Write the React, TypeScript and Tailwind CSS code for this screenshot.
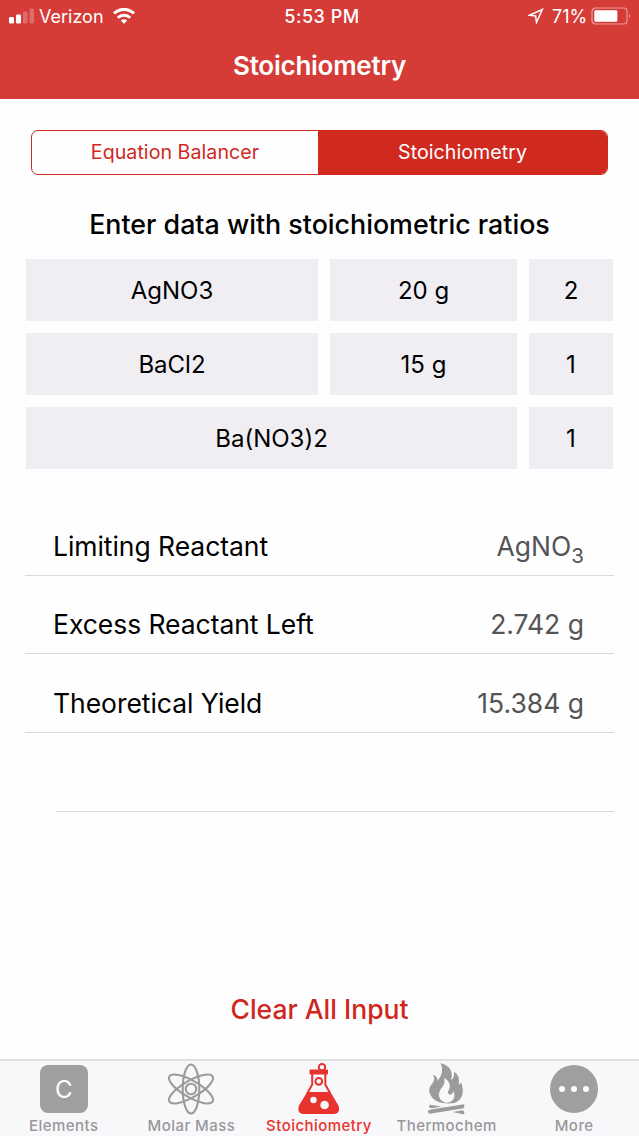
import React from 'react';
import clsx from 'clsx';

const reactants = [
  { formula: 'AgNO3', mass: '20 g', ratio: '2' },
  { formula: 'BaCl2', mass: '15 g', ratio: '1' },
];

const results = [
  { label: 'Limiting Reactant', value: <>AgNO<sub className="bottom-[-7px] text-[20.500px] leading-none">3</sub></> },
  { label: 'Excess Reactant Left', value: '2.742 g' },
  { label: 'Theoretical Yield', value: '15.384 g' },
];

const ElementsIcon = () => (
  <div className="flex h-12 w-12 items-center justify-center rounded-[8px] bg-[#9f9fa0] pt-px text-[24px] text-white">C</div>
);

const AtomIcon = () => (
  <svg viewBox="0 0 52 52" className="h-[52px] w-[52px]" fill="none" stroke="#9b9b9d" strokeWidth="2.100">
    <ellipse cx="26" cy="26" rx="8.300" ry="24.500" />
    <ellipse cx="26" cy="26" rx="8.300" ry="25" transform="rotate(60 26 26)" />
    <ellipse cx="26" cy="26" rx="8.300" ry="25" transform="rotate(120 26 26)" />
    <circle cx="26" cy="26" r="5.300" />
  </svg>
);

const FlaskIcon = () => (
  <svg viewBox="0 0 42 52" className="h-[52px] w-[42px]" fill="none" stroke="#e8322e" strokeWidth="2">
    <circle cx="24" cy="4.200" r="3.200" />
    <rect x="11.500" y="6.500" width="18.500" height="5" rx="0.800" fill="#e8322e" stroke="none" />
    <path d="M14.200 11v10.500L9.500 30M27.300 11v10.500L32 30" />
    <circle cx="20.800" cy="18.300" r="3.400" />
    <path
      fillRule="evenodd"
      fill="#e8322e"
      stroke="none"
      d="M9.200 29h23.200l8 13.500q2.600 8.600-5 8.600H6q-7.600 0-5-8.600zM12.300 37a3.200 3.200 0 1 0 6.400 0a3.200 3.200 0 1 0-6.400 0M22.300 42a4.300 4.300 0 1 0 8.600 0a4.300 4.300 0 1 0-8.600 0"
    />
  </svg>
);

const FireIcon = () => (
  <svg viewBox="0 0 40 52" className="h-[52px] w-[40px]" fill="#9b9b9d">
    <path
      fillRule="evenodd"
      d="M13.500 0.300C20 1.500 25 6 24.800 12.300c0 2-.4 3.300-.6 4.700c2.600-2 3.500-4.700 2.500-8.300c5.200 2.600 5.800 7 5 13c1.200-.3 2-1.200 2.400-2.400c3.300 9.200 2.200 16.700-5.600 20.200c-1.700.8-4 .9-7 .9c-8 0-15-1.700-18.500-9.400c-2.200-5.200.5-8.300 3-11.500c1.800-2.600 1.600-5-.2-7.700c3.700 1 5 3.300 4.800 6.200C14.500 13 16.800 7.500 13.500 0.300zM17 15c1.600 5.800-1.200 8-3.600 11.700C9.800 32.500 13 39.300 20 39.700c6.500 0 9.200-6.700 6.300-11.400c-.6 2.700-1.900 3.500-3.500 3.300c-1.900-.4-2.500-2.600-1-4.600c2.600-4.400.3-9.800-4.800-12z"
    />
    <path d="M2.600 41.800L14.500 43.600L5 45.300L2 44.600zM37 41.300Q38.300 43.500 36.600 45.200L3 50.800Q1 50.800 1 48.500Q1 47 2.500 46.800zM25.500 49L35.500 47.300Q38.200 48.500 37 50.800Q36.500 51.500 35 51z" />
  </svg>
);

const MoreIcon = () => (
  <div className="flex h-12 w-12 items-center justify-center gap-[6px] rounded-full bg-[#9f9fa0]">
    <span className="h-1.5 w-1.5 rounded-full bg-white" />
    <span className="h-1.5 w-1.5 rounded-full bg-white" />
    <span className="h-1.5 w-1.5 rounded-full bg-white" />
  </div>
);

const tabs = [
  { label: 'Elements', icon: <ElementsIcon /> },
  { label: 'Molar Mass', icon: <AtomIcon /> },
  { label: 'Stoichiometry', icon: <FlaskIcon /> },
  { label: 'Thermochem', icon: <FireIcon /> },
  { label: 'More', icon: <MoreIcon /> },
];

const StatusBar = () => (
  <div className="grid h-8 grid-cols-3 items-center pl-[9px] text-[18px] text-white">
    <div className="flex items-center">
      <svg viewBox="0 0 26 16" className="h-4 w-[26px]" fill="#fff">
        <rect x="0" y="9" width="5" height="6.500" rx="1.200" />
        <rect x="7" y="6.500" width="5" height="9" rx="1.200" />
        <rect x="14" y="3.500" width="4.500" height="12" rx="1" opacity="0.25" />
        <rect x="20.500" y="0.500" width="4.500" height="15" rx="1" opacity="0.25" />
      </svg>
      <span className="ml-1">Verizon</span>
      <svg viewBox="0 0 22 16" className="ml-[9px] h-4 w-[22px]" fill="none" stroke="#fff" strokeWidth="3">
        <path d="M1 5.500a14.200 14.200 0 0 1 20 0" />
        <path d="M4.800 9.700a8.800 8.800 0 0 1 12.400 0" />
        <path d="M11 15.700l-3.200-3.200a4.500 4.500 0 0 1 6.400 0z" fill="#fff" stroke="none" />
      </svg>
    </div>
    <span className="pr-[4px] text-center font-medium tracking-[0.500px]">5:53 PM</span>
    <div className="flex items-center justify-end pr-[8px]">
      <svg viewBox="0 0 16 16" className="h-4 w-4" fill="none" stroke="#fff" strokeWidth="1.500">
        <path d="M1.500 7.200L14.300 1.500L8.500 14.300L7.600 8z" />
      </svg>
      <span className="ml-2 tracking-[-0.100px]">71%</span>
      <svg viewBox="0 0 40 18" className="ml-1 h-[18px] w-10">
        <rect x="1" y="1" width="35" height="16" rx="3.500" fill="none" stroke="#fff" strokeOpacity="0.5" strokeWidth="1.200" />
        <rect x="3.300" y="3.200" width="23" height="11.600" rx="1" fill="#fff" />
        <path d="M38 6.500q2 2.500 0 5z" fill="#fff" opacity="0.5" />
      </svg>
    </div>
  </div>
);

const Cell = ({ className, children }: { className: string; children: React.ReactNode }) => (
  <div className={clsx('flex h-[62px] items-center justify-center bg-[#f0eef3] pt-px', className)}>{children}</div>
);

export default function App() {
  return (
    <div className="flex h-[1136px] w-[639px] flex-col bg-[#fefefe] font-['Inter',sans-serif] text-[26.500px] text-black">
      {/* Header */}
      <header className="h-[99px] bg-[#d53b37]">
        <StatusBar />
        <h1 className="pt-[14px] text-center text-[26px] leading-[40px] font-semibold tracking-[-0.250px] text-white">Stoichiometry</h1>
      </header>

      {/* Segmented control */}
      <div className="mx-[31px] mt-[31px] flex h-[45px] w-[577px] overflow-hidden rounded-[7px] border border-[#d0291f] text-[19.600px] tracking-[0.050px]">
        <button className="w-[286px] pt-px text-[#d0291f]">Equation Balancer</button>
        <button className="flex-1 bg-[#d0291f] pt-px text-white">Stoichiometry</button>
      </div>

      <h2 className="mt-[29px] text-center text-[26.800px] leading-[40px] font-medium">Enter data with stoichiometric ratios</h2>

      {/* Input table */}
      <div className="mt-[15px] ml-[26px] flex w-[587px] flex-col gap-3 text-[24px]">
        {reactants.map((row) => (
          <div key={row.formula} className="flex gap-3">
            <Cell className="w-[292px]">{row.formula}</Cell>
            <Cell className="w-[187px]">{row.mass}</Cell>
            <Cell className="w-[84px]">{row.ratio}</Cell>
          </div>
        ))}
        <div className="flex gap-3">
          <Cell className="w-[491px]">Ba(NO3)2</Cell>
          <Cell className="w-[84px]">1</Cell>
        </div>
      </div>

      {/* Results */}
      <div className="mt-7 ml-[25px] w-[589px]">
        {results.map((item) => (
          <div key={item.label} className="flex h-[78.700px] items-end justify-between border-b border-[#d9d9dc] pr-[30px] pb-[9px] pl-7 leading-[40px]">
            <span className="tracking-[-0.050px]">{item.label}</span>
            <span className="h-10 text-[#545456]">{item.value}</span>
          </div>
        ))}
        <div className="ml-[31px] h-[78.700px] border-b border-[#d9d9dc]" />
      </div>

      <button className="mx-auto mt-auto mb-[30px] leading-[40px] font-medium text-[#cf2720]">Clear All Input</button>

      {/* Tab bar */}
      <nav className="h-[77px] border-t-2 border-[#dfdfe1] bg-[#f8f7fa]">
        <div className="grid w-[638px] grid-cols-5">
          {tabs.map((tab) => (
            <div key={tab.label} className="flex flex-col items-center">
              <div className="mt-[2px] flex h-[52px] items-center">{tab.icon}</div>
              <span
                className={clsx(
                  'mt-px text-[15px] leading-[20px] font-medium tracking-[0.450px] whitespace-nowrap',
                  tab.label === 'Stoichiometry' ? 'text-[#e8322e]' : 'text-[#98989a]'
                )}
              >
                {tab.label}
              </span>
            </div>
          ))}
        </div>
      </nav>
    </div>
  );
}
